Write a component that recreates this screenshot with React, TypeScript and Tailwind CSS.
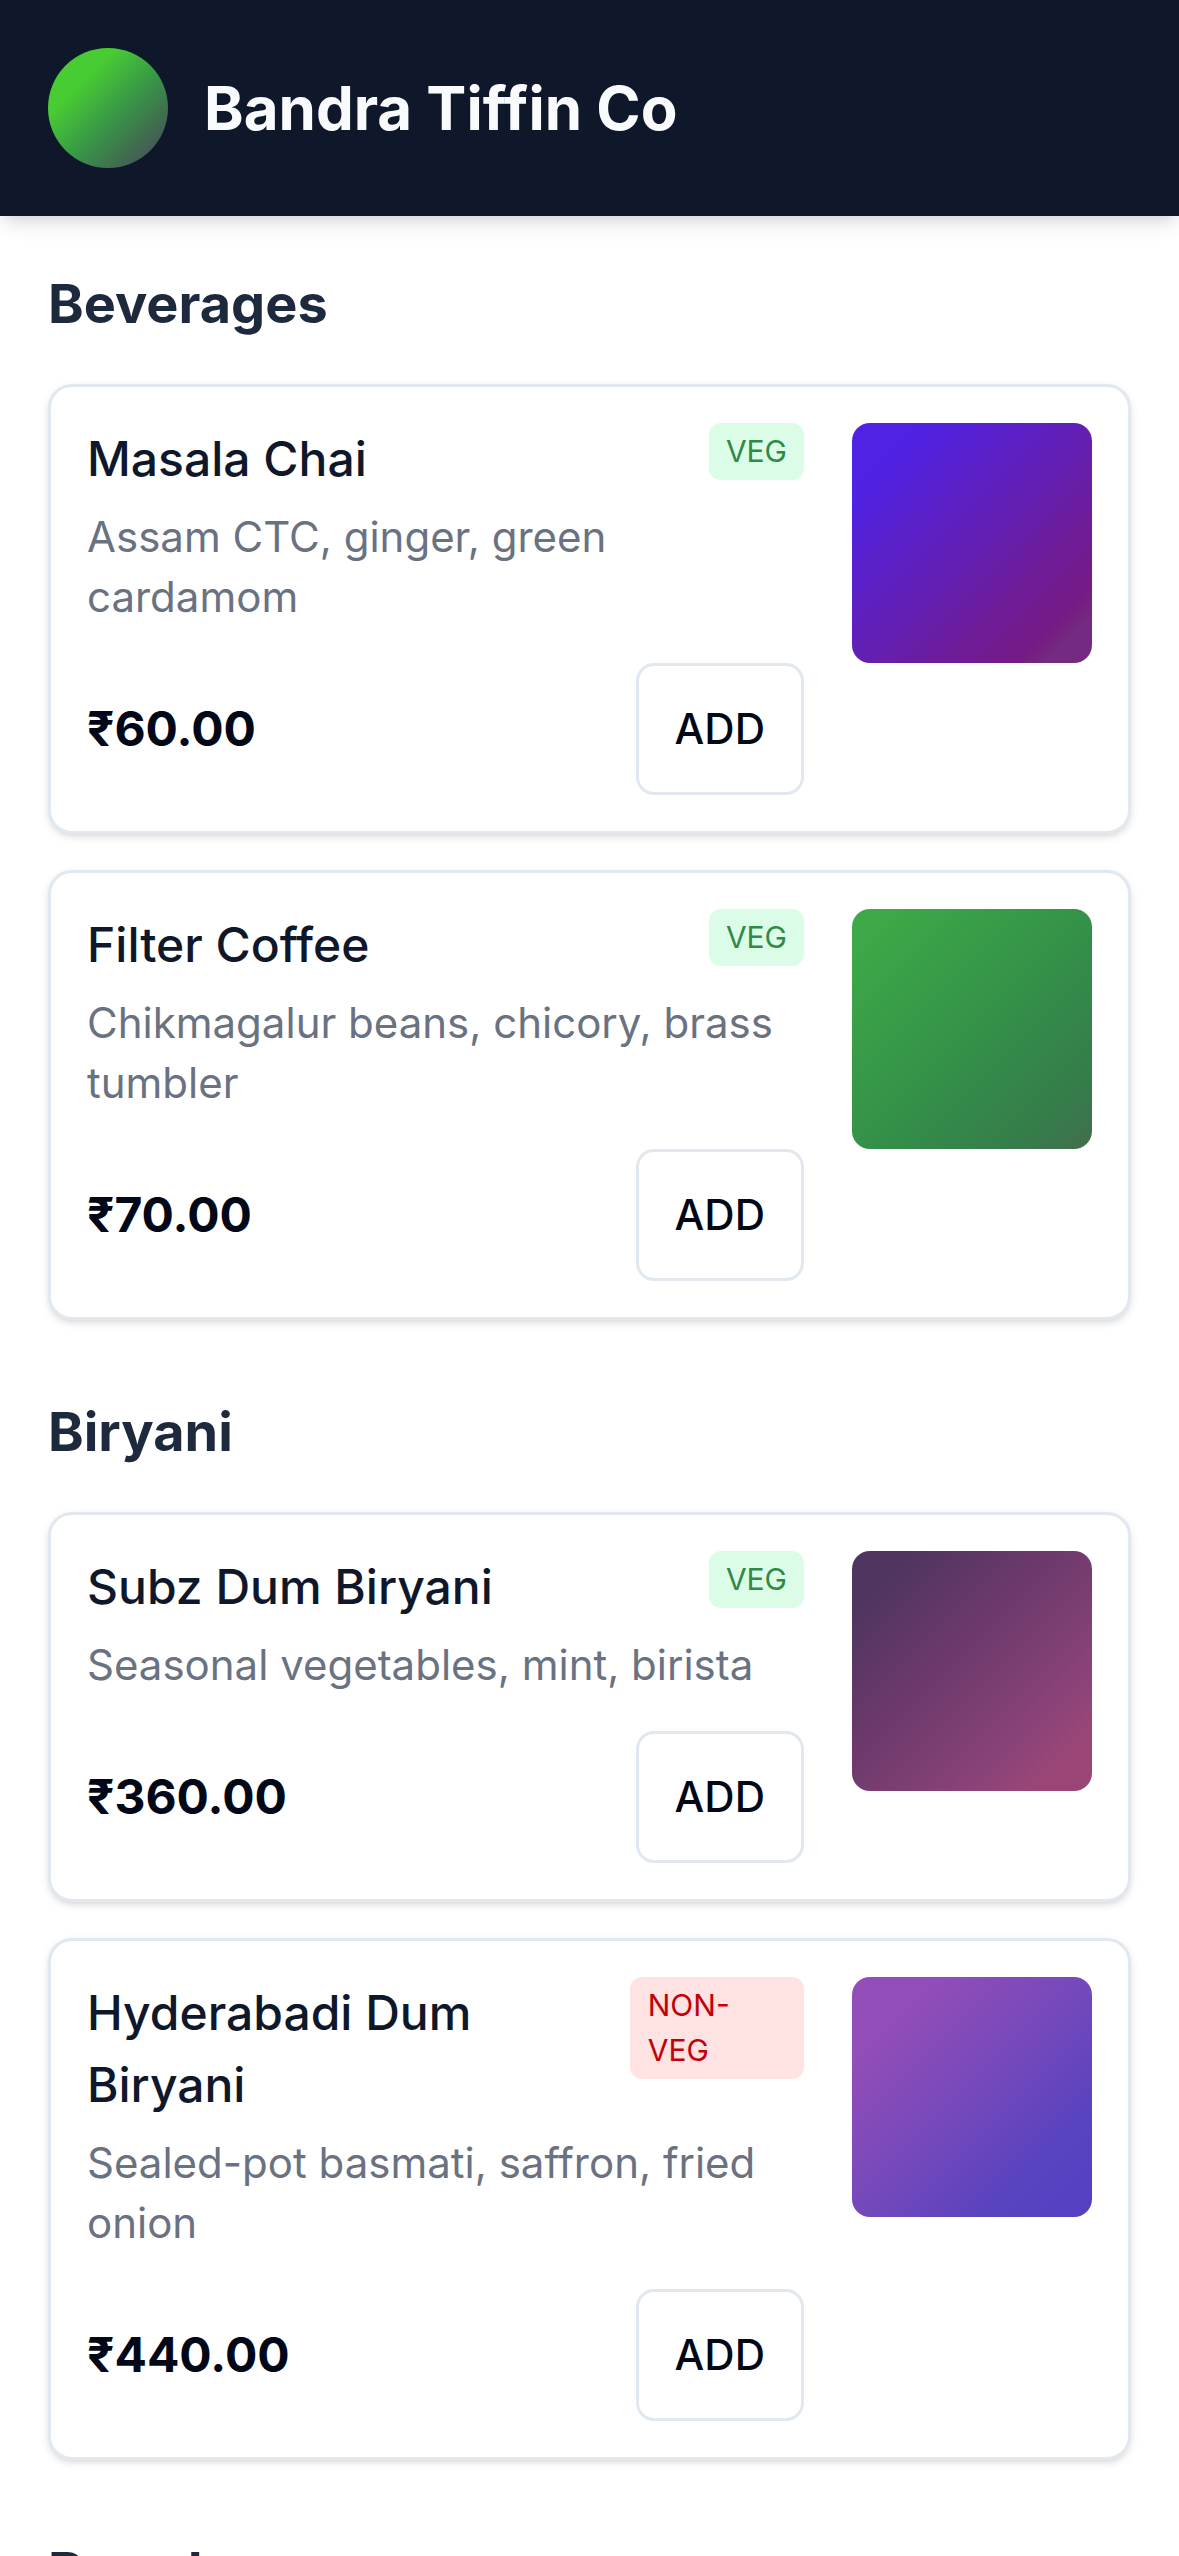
type Dish = {
  name: string;
  description: string;
  price: string;
  veg: boolean;
  art: string;
};

type Section = { title: string; dishes: Dish[] };

const menu: Section[] = [
  {
    title: "Beverages",
    dishes: [
      {
        name: "Masala Chai",
        description: "Assam CTC, ginger, green cardamom",
        price: "₹60.00",
        veg: true,
        art: "bg-[linear-gradient(135deg,#4f22e4_15%,#631fb4_50%,#761a84_84%,#732a80_90%)]",
      },
      {
        name: "Filter Coffee",
        description: "Chikmagalur beans, chicory, brass tumbler",
        price: "₹70.00",
        veg: true,
        art: "bg-[linear-gradient(135deg,#3da847_10%,#338d49_58%,#367b4b_86%,#41704c_97%)]",
      },
    ],
  },
  {
    title: "Biryani",
    dishes: [
      {
        name: "Subz Dum Biryani",
        description: "Seasonal vegetables, mint, birista",
        price: "₹360.00",
        veg: true,
        art: "bg-[linear-gradient(135deg,#4e3560_12%,#6f3a6c_45%,#8b4378_75%,#994677_86%)]",
      },
      {
        name: "Hyderabadi Dum Biryani",
        description: "Sealed-pot basmati, saffron, fried onion",
        price: "₹440.00",
        veg: false,
        art: "bg-[linear-gradient(135deg,#924db8_18%,#7548bb_50%,#5843c0_78%,#5540c2_95%)]",
      },
    ],
  },
  { title: "Breads", dishes: [] },
];

function DietBadge({ veg }: { veg: boolean }) {
  return veg ? (
    <span className="rounded-xl bg-green-100 px-[17px] py-1.5 text-[30px] leading-[45px] text-[#2f8a46]">
      VEG
    </span>
  ) : (
    <span className="rounded-xl bg-red-100 px-[18px] py-1.5 text-[30px] leading-[45px] text-red-700">
      NON-VEG
    </span>
  );
}

function DishCard({ dish }: { dish: Dish }) {
  return (
    <li className="flex items-start gap-12 rounded-3xl border-[3px] border-slate-200 bg-white p-9 shadow-[0_3px_9px_0_rgb(0_0_0/0.1),0_3px_6px_-3px_rgb(0_0_0/0.1)]">
      <div className="min-w-0 flex-1">
        <div className="flex items-start justify-between">
          <h3 className="text-5xl leading-[72px] font-medium text-slate-900">{dish.name}</h3>
          <DietBadge veg={dish.veg} />
        </div>
        <p className="mt-3 text-[42px] leading-[60px] text-gray-500">{dish.description}</p>
        <div className="mt-9 flex items-center justify-between">
          <span className="text-5xl leading-[72px] font-bold">{dish.price}</span>
          <button
            type="button"
            aria-label={`Add ${dish.name}`}
            className="h-[132px] rounded-[18px] border-[3px] border-slate-200 bg-white px-9 text-[42px] leading-[60px] font-medium"
          >
            ADD
          </button>
        </div>
      </div>
      <div className={`size-60 shrink-0 rounded-[18px] ${dish.art}`} />
    </li>
  );
}

export default function App() {
  return (
    <div className="h-screen overflow-hidden bg-white font-['Inter',sans-serif] text-[#020817]">
      <header className="flex items-center gap-9 bg-slate-900 p-12 shadow-[0_12px_18px_-3px_rgb(0_0_0/0.1),0_6px_12px_-6px_rgb(0_0_0/0.1)]">
        <div className="size-30 shrink-0 rounded-full bg-[linear-gradient(135deg,#48cc33_28%,#389747_56%,#416e4f_76%,#465358_90%)]" />
        <h1 className="text-6xl leading-[84px] font-bold text-slate-50">Bandra Tiffin Co</h1>
      </header>
      <main className="flex flex-col gap-18 px-12 py-12">
        {menu.map((section) => (
          <section key={section.title}>
            <h2 className="mb-10 text-[54px] leading-[80px] font-bold text-slate-800">
              {section.title}
            </h2>
            <ul className="flex flex-col gap-9">
              {section.dishes.map((dish) => (
                <DishCard key={dish.name} dish={dish} />
              ))}
            </ul>
          </section>
        ))}
      </main>
    </div>
  );
}
